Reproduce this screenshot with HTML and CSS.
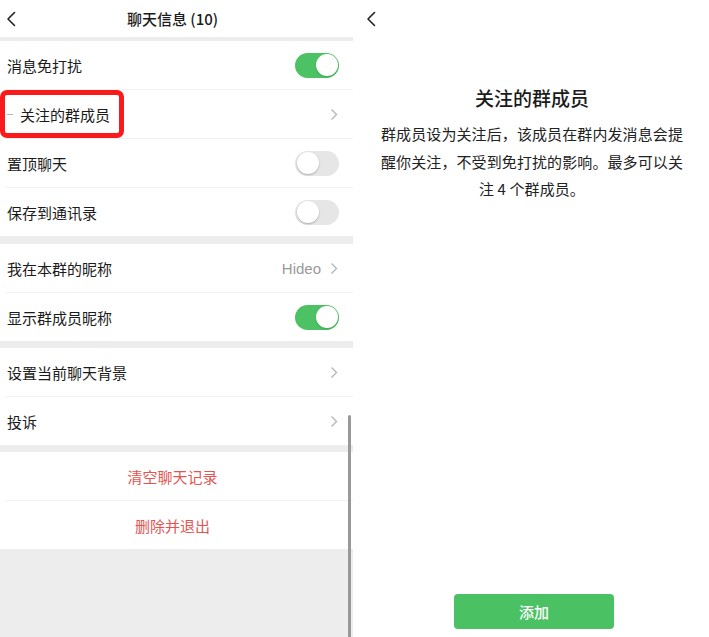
FILE: index.html
```html
<!DOCTYPE html>
<html lang="zh-CN">
<head>
<meta charset="utf-8">
<title>聊天信息</title>
<link rel="stylesheet" href="styles.css">
</head>
<body>
<div class="page">
  <section class="left">
    <header class="topbar">
      <svg class="back" width="10" height="16" viewBox="0 0 10 16"><polyline points="8.5,1.5 2,8 8.5,14.5" fill="none" stroke="#222" stroke-width="1.6" stroke-linecap="round" stroke-linejoin="round"/></svg>
      <h1 class="title">聊天信息 (10)</h1>
    </header>

    <div class="group first">
      <div class="row"><span class="label">消息免打扰</span><span class="switch on"><i></i></span></div>
      <div class="row">
        <span class="label"><span class="dash"></span>关注的群成员</span>
        <svg class="chev" width="8" height="13" viewBox="0 0 8 13"><polyline points="1.5,1.5 6.5,6.5 1.5,11.5" fill="none" stroke="#b5b5b5" stroke-width="1.3"/></svg>
        <span class="highlight"></span>
      </div>
      <div class="row"><span class="label">置顶聊天</span><span class="switch"><i></i></span></div>
      <div class="row"><span class="label">保存到通讯录</span><span class="switch"><i></i></span></div>
    </div>

    <div class="group g2">
      <div class="row"><span class="label">我在本群的昵称</span><span class="value">Hideo<svg class="chev" width="8" height="13" viewBox="0 0 8 13"><polyline points="1.5,1.5 6.5,6.5 1.5,11.5" fill="none" stroke="#b5b5b5" stroke-width="1.3"/></svg></span></div>
      <div class="row"><span class="label">显示群成员昵称</span><span class="switch on"><i></i></span></div>
    </div>

    <div class="group g3">
      <div class="row"><span class="label">设置当前聊天背景</span><svg class="chev" width="8" height="13" viewBox="0 0 8 13"><polyline points="1.5,1.5 6.5,6.5 1.5,11.5" fill="none" stroke="#b5b5b5" stroke-width="1.3"/></svg></div>
      <div class="row"><span class="label">投诉</span><svg class="chev" width="8" height="13" viewBox="0 0 8 13"><polyline points="1.5,1.5 6.5,6.5 1.5,11.5" fill="none" stroke="#b5b5b5" stroke-width="1.3"/></svg></div>
    </div>

    <div class="group g4">
      <div class="row danger">清空聊天记录</div>
      <div class="row danger">删除并退出</div>
    </div>

    <span class="scrollbar"></span>
  </section>

  <section class="right">
    <header class="topbar2">
      <svg class="back" width="10" height="16" viewBox="0 0 10 16"><polyline points="8.5,1.5 2,8 8.5,14.5" fill="none" stroke="#222" stroke-width="1.6" stroke-linecap="round" stroke-linejoin="round"/></svg>
    </header>
    <h2 class="rtitle">关注的群成员</h2>
    <p class="desc">群成员设为关注后，该成员在群内发消息会提醒你关注，不受到免打扰的影响。最多可以关注 4 个群成员。</p>
    <div class="spacer"></div>
    <button class="add">添加</button>
  </section>
</div>
</body>
</html>
```

FILE: styles.css
```css
* { box-sizing: border-box; }
html, body { margin: 0; padding: 0; background: #fff; }
body {
  font-family: "Noto Sans CJK SC", "Noto Sans", "Liberation Sans", sans-serif;
  color: #1b1b1b;
}
.page {
  display: flex;
  width: 709px;
  height: 637px;
  overflow: hidden;
}

/* left panel */
.left {
  position: relative;
  width: 353px;
  height: 637px;
  background: #ededed;
  display: flex;
  flex-direction: column;
  overflow: hidden;
}
.topbar {
  height: 37px;
  background: #fff;
  display: flex;
  align-items: center;
  position: relative;
  padding-right: 8px;
  margin-bottom: 4px;
}
.back { display: block; flex: none; }
.topbar .back { position: absolute; left: 6px; top: 11px; }
.title {
  flex: 1;
  margin: 0;
  text-align: center;
  font-size: 15px;
  font-weight: 500;
  color: #1b1b1b;
  line-height: 20px;
}
.group {
  background: #fff;
  padding-left: 6px;
}
.group.g2 { margin-top: 8px; }
.group.g3 { margin-top: 7px; }
.group.g4 { margin-top: 7px; }
.row {
  position: relative;
  height: 48px;
  display: flex;
  align-items: center;
  justify-content: space-between;
  padding: 0 14px 0 1px;
  font-size: 15px;
}
.row + .row { height: 49px; border-top: 1px solid #f1f1f1; }
.label { display: flex; align-items: center; }
.dash {
  width: 6px;
  height: 1px;
  background: #b5b5b5;
  margin-right: 7px;
}
.chev { display: block; margin-right: 1px; }
.value {
  display: flex;
  align-items: center;
  gap: 9px;
  color: #9a9a9a;
  font-family: "Liberation Sans", "Noto Sans", sans-serif;
  font-size: 15px;
}
.switch {
  position: relative;
  width: 44px;
  height: 25px;
  border-radius: 13px;
  background: #e6e6e6;
  flex: none;
}
.switch i {
  position: absolute;
  top: 1.5px;
  left: 1.5px;
  width: 22px;
  height: 22px;
  border-radius: 50%;
  background: #fff;
  box-shadow: 0 1px 2px rgba(0,0,0,0.25);
}
.switch.on { background: #4cc264; }
.switch.on i { left: auto; right: 1.5px; box-shadow: 0 1px 2px rgba(0,0,0,0.15); }
.highlight {
  position: absolute;
  left: -6px;
  top: 0px;
  width: 124px;
  height: 48px;
  border: 5px solid #f91b1b;
  border-radius: 7px;
}
.danger {
  justify-content: center;
  color: #e35553;
  padding: 0 14px 0 0;
}
.scrollbar {
  position: absolute;
  left: 348px;
  top: 415px;
  width: 3px;
  height: 240px;
  border-radius: 2px;
  background: #999;
}

/* right panel */
.right {
  flex: 1;
  margin-left: 2px;
  height: 637px;
  background: #fff;
  display: flex;
  flex-direction: column;
  align-items: center;
}
.topbar2 {
  align-self: stretch;
  height: 37px;
  position: relative;
}
.topbar2 .back { position: absolute; left: 11px; top: 11px; }
.rtitle {
  margin: 48px 0 0;
  font-size: 19px;
  font-weight: 500;
  line-height: 26px;
  color: #1b1b1b;
}
.desc {
  margin: 9px 0 0;
  width: 306px;
  font-size: 15px;
  line-height: 27.5px;
  letter-spacing: 0.1px;
  text-align: center;
  color: #222;
}
.spacer { flex: 1; }
.add {
  width: 160px;
  height: 35px;
  margin: 0 0 8px 4px;
  border: none;
  border-radius: 4px;
  background: #4ac264;
  color: #fff;
  font-family: inherit;
  font-size: 15px;
  font-weight: 500;
}
```
